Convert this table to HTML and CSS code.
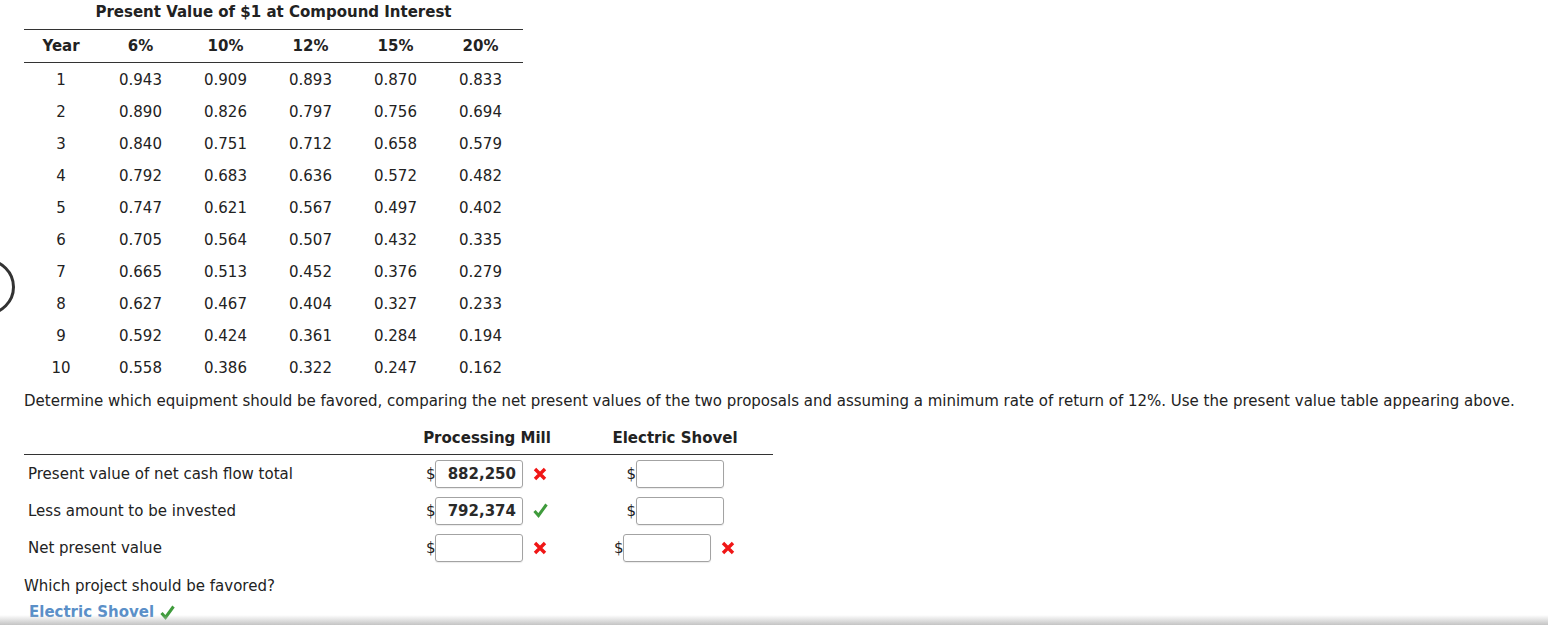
FILE: index.html
```html
<!DOCTYPE html>
<html>
<head>
<meta charset="utf-8">
<link rel="stylesheet" href="styles.css">
</head>
<body>
<div class="ring"></div>
<div class="page">
  <table class="pv">
    <caption class="pv-title">Present Value of $1 at Compound Interest</caption>
    <thead>
      <tr><th class="c-year">Year</th><th>6%</th><th>10%</th><th>12%</th><th>15%</th><th>20%</th></tr>
    </thead>
    <tbody>
      <tr><td>1</td><td>0.943</td><td>0.909</td><td>0.893</td><td>0.870</td><td>0.833</td></tr>
      <tr><td>2</td><td>0.890</td><td>0.826</td><td>0.797</td><td>0.756</td><td>0.694</td></tr>
      <tr><td>3</td><td>0.840</td><td>0.751</td><td>0.712</td><td>0.658</td><td>0.579</td></tr>
      <tr><td>4</td><td>0.792</td><td>0.683</td><td>0.636</td><td>0.572</td><td>0.482</td></tr>
      <tr><td>5</td><td>0.747</td><td>0.621</td><td>0.567</td><td>0.497</td><td>0.402</td></tr>
      <tr><td>6</td><td>0.705</td><td>0.564</td><td>0.507</td><td>0.432</td><td>0.335</td></tr>
      <tr><td>7</td><td>0.665</td><td>0.513</td><td>0.452</td><td>0.376</td><td>0.279</td></tr>
      <tr><td>8</td><td>0.627</td><td>0.467</td><td>0.404</td><td>0.327</td><td>0.233</td></tr>
      <tr><td>9</td><td>0.592</td><td>0.424</td><td>0.361</td><td>0.284</td><td>0.194</td></tr>
      <tr><td>10</td><td>0.558</td><td>0.386</td><td>0.322</td><td>0.247</td><td>0.162</td></tr>
    </tbody>
  </table>

  <p class="prompt">Determine which equipment should be favored, comparing the net present values of the two proposals and assuming a minimum rate of return of 12%. Use the present value table appearing above.</p>

  <div class="npv">
    <div class="npv-row npv-head">
      <div class="c-label"></div>
      <div class="c-mill">Processing Mill</div>
      <div class="c-shovel">Electric Shovel</div>
    </div>
    <div class="npv-row">
      <div class="c-label">Present value of net cash flow total</div>
      <div class="c-mill"><span class="cur">$</span><span class="box">882,250</span><span class="mark"><svg viewBox="0 0 14 14" width="14" height="14"><path d="M2 2 L12 12 M12 2 L2 12" stroke="#f01616" stroke-width="3.4"/></svg></span></div>
      <div class="c-shovel"><span class="cur">$</span><span class="box"></span></div>
    </div>
    <div class="npv-row">
      <div class="c-label">Less amount to be invested</div>
      <div class="c-mill"><span class="cur">$</span><span class="box">792,374</span><span class="mark"><svg viewBox="0 0 15 15" width="15" height="15"><path d="M1.5 8 L5.5 12.5 L13.5 1.5" fill="none" stroke="#3f9b3c" stroke-width="3"/></svg></span></div>
      <div class="c-shovel"><span class="cur">$</span><span class="box"></span></div>
    </div>
    <div class="npv-row">
      <div class="c-label">Net present value</div>
      <div class="c-mill"><span class="cur">$</span><span class="box"></span><span class="mark"><svg viewBox="0 0 14 14" width="14" height="14"><path d="M2 2 L12 12 M12 2 L2 12" stroke="#f01616" stroke-width="3.4"/></svg></span></div>
      <div class="c-shovel"><span class="cur">$</span><span class="box"></span><span class="mark"><svg viewBox="0 0 14 14" width="14" height="14"><path d="M2 2 L12 12 M12 2 L2 12" stroke="#f01616" stroke-width="3.4"/></svg></span></div>
    </div>
  </div>

  <p class="question">Which project should be favored?</p>
  <div class="answer">Electric Shovel <svg class="answer-check" viewBox="0 0 15 15" width="15" height="15"><path d="M1.5 8 L5.5 12.5 L13.5 1.5" fill="none" stroke="#3f9b3c" stroke-width="3"/></svg></div>
</div>
<div class="bottom-shade"></div>
</body>
</html>
```

FILE: styles.css
```css
html, body {
  margin: 0;
  padding: 0;
  background: #fff;
}
body {
  font-family: "DejaVu Sans", Verdana, sans-serif;
  font-size: 15px;
  color: #222;
  overflow: hidden;
  height: 625px;
  position: relative;
}
.ring {
  position: absolute;
  left: -41px;
  top: 259px;
  width: 50px;
  height: 50px;
  border: 3px solid #333;
  border-radius: 50%;
}
.page {
  padding-left: 24px;
  padding-top: 1px;
}
.pv {
  border-collapse: collapse;
  width: 499px;
  table-layout: fixed;
}
.pv-title {
  font-weight: bold;
  height: 28px;
  line-height: 23px;
  text-align: center;
}
.pv th, .pv td {
  padding: 0;
  height: 32px;
  text-align: center;
  width: 85px;
}
.pv th.c-year {
  width: 74px;
}
.pv thead tr {
  border-top: 1px solid #333;
  border-bottom: 1px solid #333;
}
.pv tbody td {
  padding-top: 2px;
  height: 30px;
}
.prompt {
  margin: 9px 0 0 0;
  line-height: 18px;
}
.npv {
  width: 749px;
  margin-top: 19px;
}
.npv-row {
  display: flex;
  align-items: center;
  height: 37px;
}
.npv-row.npv-head {
  height: 25px;
  font-weight: bold;
  border-bottom: 1px solid #333;
  align-items: flex-start;
}
.c-label {
  width: 369px;
  padding-left: 4px;
}
.c-mill {
  width: 180px;
  display: flex;
  justify-content: center;
  align-items: center;
}
.c-shovel {
  width: 196px;
  display: flex;
  justify-content: center;
  align-items: center;
}
.cur {
  width: 9px;
  text-align: left;
}
.box {
  box-sizing: border-box;
  width: 88px;
  height: 28px;
  border: 1px solid #a3a3a3;
  border-radius: 3px;
  box-shadow: 0 1px 1px rgba(0,0,0,0.08);
  font-weight: bold;
  text-align: right;
  padding-right: 6px;
  line-height: 26px;
  color: #2a2a2a;
}
.mark {
  margin-left: 10px;
  width: 15px;
  height: 15px;
  display: flex;
  align-items: center;
}
.question {
  margin: 11px 0 0 0;
  line-height: 18px;
}
.answer {
  margin: 8px 0 0 5px;
  color: #5a8fc8;
  font-weight: bold;
  line-height: 18px;
  display: flex;
  align-items: center;
  gap: 6px;
}
.bottom-shade {
  position: absolute;
  left: 0;
  right: 0;
  bottom: 0;
  height: 10px;
  background: linear-gradient(to bottom, rgba(255,255,255,0), #c4c4c4);
}
```
